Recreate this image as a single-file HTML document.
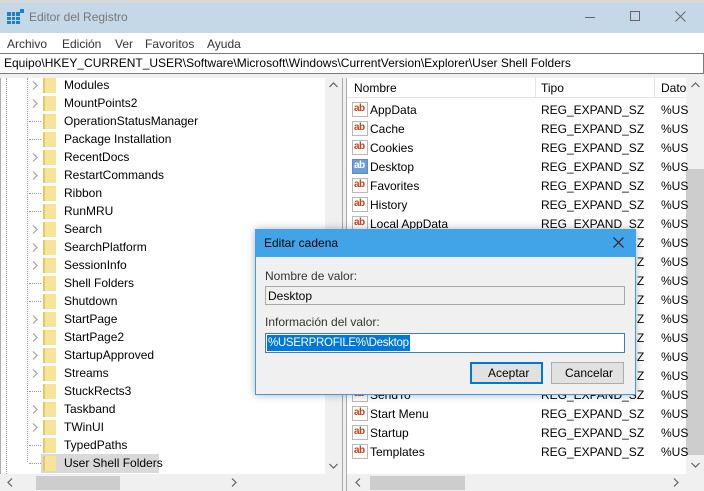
<!DOCTYPE html>
<html><head><meta charset="utf-8"><style>
*{margin:0;padding:0;box-sizing:border-box}
body{width:704px;height:491px;overflow:hidden;background:#fff;font-family:"Liberation Sans",sans-serif;font-size:12px;color:#000;position:relative}
.a{position:absolute;white-space:nowrap}
.fold{position:absolute;width:13px;height:15px;background:#f8e39b;border-left:2px solid #e9c860}
.ab{position:absolute;width:16px;height:15px;border:1px solid #b9b9b9;background:#fff;font-size:10px;font-weight:bold;color:#c5431c;line-height:11px;padding-left:1px;letter-spacing:-0.5px}
.arr{position:absolute;color:#a0a0a0;font-size:11px}
</style></head><body>
<div class="a" style="left:0;top:0;width:704px;height:3px;background:#d9d9d9"></div>
<div class="a" style="left:0;top:3px;width:704px;height:30px;background:#c4d8e7"></div>
<svg class="a" style="left:7px;top:9px" width="18" height="16"><rect x="0" y="3" width="13" height="12" fill="#1f7fc9"/><g stroke="#c4d8e7" stroke-width="1"><line x1="4.5" y1="3" x2="4.5" y2="15"/><line x1="8.5" y1="3" x2="8.5" y2="15"/><line x1="0" y1="7.5" x2="13" y2="7.5"/><line x1="0" y1="11.5" x2="13" y2="11.5"/></g><rect x="13" y="0" width="4" height="4" fill="#1f7fc9"/></svg>
<div class="a" style="left:29px;top:10px;font-size:12px;color:#777">Editor del Registro</div>
<div class="a" style="left:585px;top:17px;width:10px;height:1px;background:#666"></div>
<div class="a" style="left:630px;top:11px;width:10px;height:10px;border:1px solid #666"></div>
<svg class="a" style="left:675px;top:11px" width="11" height="11"><path d="M0.5 0.5L10.5 10.5M10.5 0.5L0.5 10.5" stroke="#666" stroke-width="1"/></svg>
<div class="a" style="left:7px;top:37px;color:#333">Archivo</div>
<div class="a" style="left:62px;top:37px;color:#333">Edición</div>
<div class="a" style="left:115px;top:37px;color:#333">Ver</div>
<div class="a" style="left:145px;top:37px;color:#333">Favoritos</div>
<div class="a" style="left:207px;top:37px;color:#333">Ayuda</div>
<div class="a" style="left:0;top:53px;width:704px;height:21px;border:1px solid #7a7a7a;border-left:none"></div>
<div class="a" style="left:4px;top:56px">Equipo\HKEY_CURRENT_USER\Software\Microsoft\Windows\CurrentVersion\Explorer\User Shell Folders</div>
<div class="a" style="left:0;top:74px;width:704px;height:4px;background:#f0f0f0"></div>
<div class="a" style="left:0;top:78px;width:1px;height:413px;background:#aaa"></div>
<div class="a" style="left:6px;top:78px;height:396px;border-left:1px dotted #999"></div>
<div class="a" style="left:27px;top:78px;height:384px;border-left:1px dotted #999"></div>
<div class="a" style="left:325px;top:78px;width:17px;height:396px;background:#f0f0f0"></div>
<svg class="a" style="left:329px;top:82px" width="9" height="6"><path d="M0.5 5L4.5 1L8.5 5" stroke="#606060" fill="none" stroke-width="1.2"/></svg>
<svg class="a" style="left:329px;top:463px" width="9" height="6"><path d="M0.5 1L4.5 5L8.5 1" stroke="#606060" fill="none" stroke-width="1.2"/></svg>
<div class="a" style="left:342px;top:78px;width:5px;height:413px;background:#f0f0f0;border-left:1px solid #aaa;border-right:1px solid #aaa"></div>
<div class="a" style="left:0;top:474px;width:342px;height:17px;background:#f0f0f0"></div>
<div class="a" style="left:36px;top:476px;width:84px;height:14px;background:#cdcdcd"></div>
<svg class="a" style="left:7px;top:478px" width="6" height="9"><path d="M5 0.5L1 4.5L5 8.5" stroke="#606060" fill="none" stroke-width="1.2"/></svg>
<svg class="a" style="left:231px;top:478px" width="6" height="9"><path d="M1 0.5L5 4.5L1 8.5" stroke="#606060" fill="none" stroke-width="1.2"/></svg>
<div id="tree"></div>
<div class="a" style="left:347px;top:78px;width:340px;height:20px;border-bottom:1px solid #e5e5e5"></div>
<div class="a" style="left:535px;top:78px;width:1px;height:20px;background:#e5e5e5"></div>
<div class="a" style="left:654px;top:78px;width:1px;height:20px;background:#e5e5e5"></div>
<div class="a" style="left:354px;top:81px">Nombre</div>
<div class="a" style="left:541px;top:81px">Tipo</div>
<div class="a" style="left:661px;top:81px">Dato</div>
<div class="a" style="left:686px;top:78px;width:18px;height:396px;background:#f0f0f0"></div>
<div class="a" style="left:686px;top:169px;width:18px;height:286px;background:#cdcdcd"></div>
<svg class="a" style="left:691px;top:82px" width="9" height="6"><path d="M0.5 5L4.5 1L8.5 5" stroke="#606060" fill="none" stroke-width="1.2"/></svg>
<svg class="a" style="left:691px;top:462px" width="9" height="6"><path d="M0.5 1L4.5 5L8.5 1" stroke="#606060" fill="none" stroke-width="1.2"/></svg>
<div class="a" style="left:347px;top:474px;width:357px;height:17px;background:#f0f0f0"></div>
<div class="a" style="left:370px;top:476px;width:95px;height:14px;background:#cdcdcd"></div>
<svg class="a" style="left:355px;top:478px" width="6" height="9"><path d="M5 0.5L1 4.5L5 8.5" stroke="#606060" fill="none" stroke-width="1.2"/></svg>
<svg class="a" style="left:673px;top:478px" width="6" height="9"><path d="M1 0.5L5 4.5L1 8.5" stroke="#606060" fill="none" stroke-width="1.2"/></svg>
<div id="list"></div>
<div class="a" style="left:255px;top:229px;width:381px;height:166px;background:#f0f0f0;border:1px solid #3d9be0;box-shadow:0 0 8px rgba(0,0,0,.3)"></div>
<div class="a" style="left:255px;top:229px;width:381px;height:28px;background:#41a4e8"></div>
<div class="a" style="left:264px;top:236px">Editar cadena</div>
<svg class="a" style="left:613px;top:237px" width="11" height="11"><path d="M0.5 0.5L10.5 10.5M10.5 0.5L0.5 10.5" stroke="#222" stroke-width="1.2"/></svg>
<div class="a" style="left:265px;top:269px;color:#333">Nombre de valor:</div>
<div class="a" style="left:265px;top:286px;width:360px;height:19px;border:1px solid #a8a8a8;background:#f0f0f0"></div>
<div class="a" style="left:268px;top:289px">Desktop</div>
<div class="a" style="left:265px;top:315px;color:#333">Información del valor:</div>
<div class="a" style="left:265px;top:333px;width:360px;height:20px;border:1px solid #3c7fb1;background:#fff"></div>
<div class="a" style="left:267px;top:335px;height:16px;background:#0078d7;color:#fff;font-size:11.5px;letter-spacing:-0.3px;line-height:16px;padding:0 1px">%USERPROFILE%\Desktop</div>
<div class="a" style="left:470px;top:362px;width:73px;height:22px;background:#e1e1e1;border:2px solid #0078d7"></div>
<div class="a" style="left:488px;top:366px">Aceptar</div>
<div class="a" style="left:551px;top:362px;width:73px;height:22px;background:#e1e1e1;border:1px solid #adadad"></div>
<div class="a" style="left:565px;top:366px">Cancelar</div>
<script>
var t=["Modules","MountPoints2","OperationStatusManager","Package Installation","RecentDocs","RestartCommands","Ribbon","RunMRU","Search","SearchPlatform","SessionInfo","Shell Folders","Shutdown","StartPage","StartPage2","StartupApproved","Streams","StuckRects3","Taskband","TWinUI","TypedPaths","User Shell Folders"];
var exp=[1,1,0,0,1,1,0,0,1,1,1,0,0,1,1,1,1,0,1,1,0,0];
var h="";
t.forEach(function(n,i){var y=69+i*18;
if(exp[i])h+='<svg class="a" style="left:32px;top:'+(y+12)+'px" width="6" height="9"><path d="M1 0.5L5 4.5L1 8.5" stroke="#a0a0a0" fill="none" stroke-width="1.2"/></svg>';else h+='<div class="a" style="left:29px;top:'+(y+16)+'px;width:12px;border-top:1px dotted #999"></div>';
if(i==21)h+='<div class="a" style="left:41px;top:'+(y+7)+'px;width:118px;height:19px;background:#d9d9d9"></div>';
h+='<div class="fold" style="left:43px;top:'+(y+9)+'px"></div><div class="a" style="left:64px;top:'+(y+9)+'px">'+n+'</div>';});
document.getElementById("tree").outerHTML=h;
var l=["AppData","Cache","Cookies","Desktop","Favorites","History","Local AppData","My Music","My Pictures","My Video","NetHood","Personal","PrintHood","Programs","Recent","SendTo","Start Menu","Startup","Templates"];
h="";
l.forEach(function(n,i){var y=102+i*19;
h+='<div class="ab" style="left:352px;top:'+(y)+'px;'+(i==3?'background:#6c9fd6;color:#fff;border-color:#5b8cc4':'')+'">ab</div><div class="a" style="left:370px;top:'+(y+1)+'px">'+n+'</div><div class="a" style="left:541px;top:'+(y+1)+'px">REG_EXPAND_SZ</div><div class="a" style="left:661px;top:'+(y+1)+'px">%US</div>';});
document.getElementById("list").outerHTML=h;
</script>
</body></html>
